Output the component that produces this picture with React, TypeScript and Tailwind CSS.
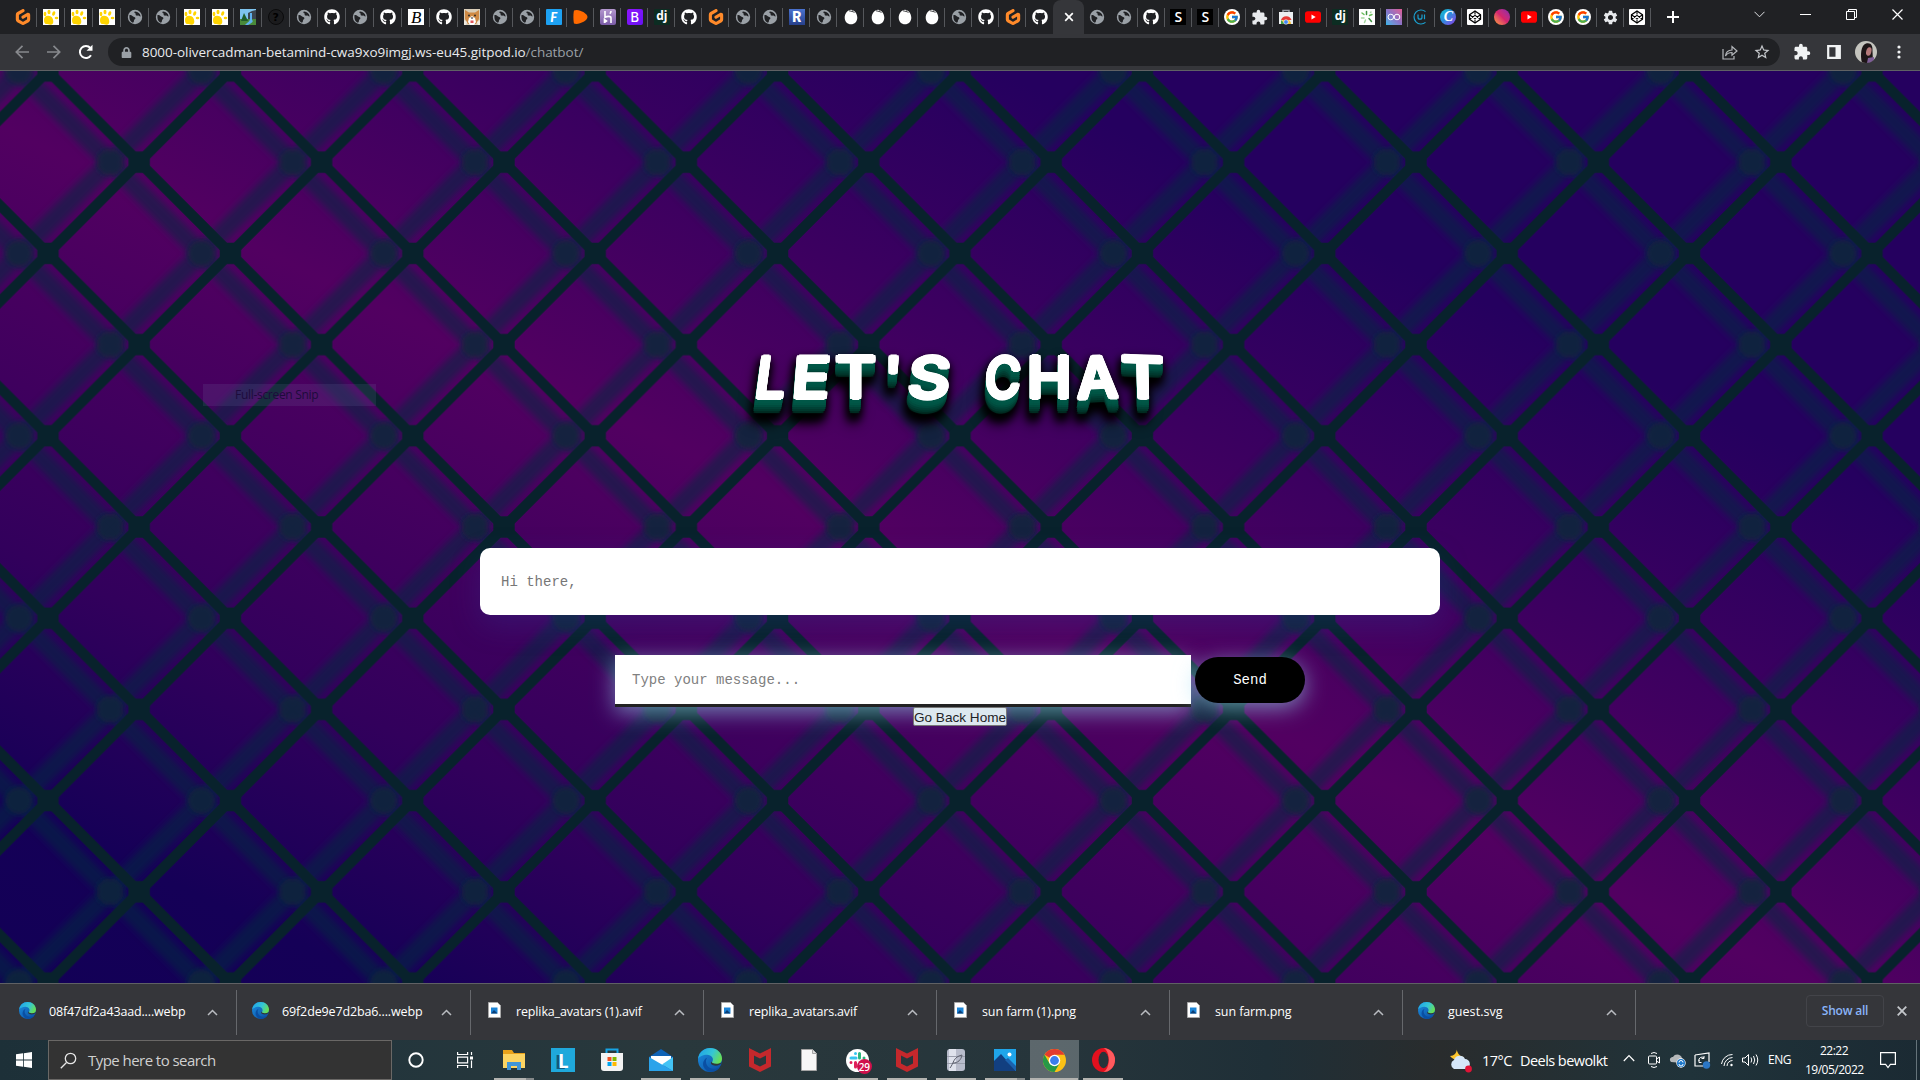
import React from "react";
import { FaGithub, FaLock } from "react-icons/fa";
import { FcGoogle } from "react-icons/fc";
import { SiGitpod } from "react-icons/si";
import { MdExtension, MdSettings, MdStarBorder } from "react-icons/md";

type IconProps = { size?: number };

const Globe = () => (
  <svg width="16" height="16" viewBox="0 0 16 16">
    <circle cx="8" cy="8" r="7.200" fill="#9aa0a6" />
    <path d="M2.500 6c1.500 0 2.300.2 2.900 1 .8 1.200 2.600.6 3 2 .3 1.400-1.600 1.300-1.500 2.900 0 1-.7 1.500-1 1.900C3.500 12.800 2 10.500 2.500 6z" fill="#202124" />
    <path d="M8.300 2.500c2.700.2 4.900 2 5.300 4.700-1 .8-1.300-.9-2.500-.6-1.500.4-3-.2-2.400-1.600.3-.9-1.200-.7-1.300-1.500-.1-.6.3-.8.9-1z" fill="#202124" />
  </svg>
);

const Paw = () => (
  <span className="flex h-4 w-4 items-center justify-center bg-white">
    <svg width="16" height="16" viewBox="0 0 16 16" fill="#ffd400">
      <path d="M1 11c0-3 2-4.500 4.500-4.200C8.500 7 10 9 10.300 12c.2 2.500-1 4-3 3.800-1.500-.3-2.500-.8-4-.8C1.500 15 1 13 1 11z" />
      <ellipse cx="2" cy="5" rx="1.400" ry="2.200" />
      <ellipse cx="6" cy="3" rx="1.500" ry="2.300" />
      <ellipse cx="10.700" cy="4.500" rx="1.500" ry="2.300" transform="rotate(20 10.700 4.500)" />
      <ellipse cx="13.500" cy="9" rx="1.800" ry="1.300" />
    </svg>
  </span>
);

const Landscape = () => (
  <svg width="16" height="16" viewBox="0 0 16 16">
    <rect width="16" height="16" fill="#7ec3ee" />
    <path d="M8 4l4-2 4-1v10H8z" fill="#3c4650" />
    <path d="M0 10h16v6H0z" fill="#4a8a3a" />
    <path d="M10 4h2v7c2 1 0 3-4 5H5c3-3 5-4 5-6z" fill="#5fb2ef" />
    <path d="M4 4l4 8H1z" fill="#1f5c2a" />
  </svg>
);

const Question = () => (
  <span className="flex h-4 w-4 items-center justify-center rounded-full border border-[#0b0b0c] bg-[#1b1b1d] font-['DejaVu_Sans'] text-[11px] leading-none font-bold text-black">?</span>
);

const Corgi = () => (
  <svg width="16" height="16" viewBox="0 0 16 16">
    <rect width="16" height="16" fill="#d9cdb8" />
    <path d="M1 1l4 2.500h6L15 1v9l-3 5H4l-3-5z" fill="#cf8a45" />
    <path d="M5 9l3-2 3 2 1 4-2 3H6l-2-3z" fill="#fff" />
    <circle cx="5" cy="6.500" r=".9" fill="#222" />
    <circle cx="11" cy="6.500" r=".9" fill="#222" />
    <path d="M6.500 8.500h3L8 10z" fill="#222" />
    <path d="M6.500 11.500h3v2.500h-3z" fill="#e0575b" />
    <path d="M0 11l3 2-1 3H0zM16 11l-3 2 1 3h2z" fill="#efeae0" />
  </svg>
);

const Egg = () => (
  <svg width="16" height="16" viewBox="0 0 16 16">
    <path d="M8 .8c3.500 0 6.300 4 6.300 8 0 3.800-2.700 6.500-6.300 6.500S1.700 12.600 1.700 8.800c0-4 2.800-8 6.300-8z" fill="#fff" />
    <path d="M6 1.800l3 .6 1-1.200M9 2.400l2.600 1" stroke="#202124" fill="none" strokeWidth=".8" />
  </svg>
);

const Letter = ({ c, t }: { c: string; t: string }) => (
  <span className={"flex h-4 w-4 items-center justify-center leading-none " + c}>{t}</span>
);

const WebStore = () => (
  <svg width="16" height="16" viewBox="0 0 16 16">
    <path d="M5 4V1.500h6V4" fill="none" stroke="#9aa0a6" strokeWidth="1.500" />
    <path d="M1 3h14v12H1z" fill="#eceff1" />
    <path d="M3 15a5 5 0 0 1 10 0z" fill="#fbc02d" />
    <path d="M3 11a5.500 5.500 0 0 1 10.500 0z" fill="#e53935" />
    <path d="M3 11v4h4z" fill="#43a047" />
    <circle cx="8" cy="13" r="2.300" fill="#4285f4" stroke="#fff" strokeWidth=".6" />
  </svg>
);

const Youtube = () => (
  <svg width="16" height="16" viewBox="0 0 16 16">
    <rect y="2.300" width="16" height="11.400" rx="2.800" fill="#f00" />
    <path d="M6.500 5.500v5L10.700 8z" fill="#fff" />
  </svg>
);

const Leaf = () => (
  <svg width="16" height="16" viewBox="0 0 16 16">
    <rect width="16" height="16" fill="#fff" />
    <g strokeWidth="1.500" strokeLinecap="round">
      <path d="M7.500 2.500v3M10 9.500l2.500 3" stroke="#3f9142" />
      <path d="M3 4l2 1.500M10.500 6.500l2.500-1" stroke="#6abf5b" />
      <path d="M2.500 9h2.500M6.500 11L5.500 13.500M11.500 3.500l.5-.5" stroke="#a5d6a0" />
    </g>
  </svg>
);

const Plug = () => (
  <svg width="16" height="16" viewBox="0 0 16 16" fill="none">
    <path d="M12.500 2.600a7 7 0 1 0 0 10.800" stroke="#1ba0cf" strokeWidth="1.200" />
    <path d="M5 5.500v2.700a2 2 0 0 0 4 0V5.500M11.500 5.500v4.700" stroke="#1ba0cf" strokeWidth="1.200" />
  </svg>
);

const Infinity2 = () => (
  <span className="flex h-4 w-4 items-center justify-center bg-linear-to-tr from-[#22b5e8] via-[#8a72c6] to-[#e15a94]">
    <svg width="14" height="8" viewBox="0 0 14 8" fill="none" stroke="#fff" strokeWidth="1">
      <circle cx="3.800" cy="4" r="2.800" />
      <circle cx="10" cy="4" r="2.800" />
    </svg>
  </span>
);

const Codepen = () => (
  <svg width="16" height="16" viewBox="0 0 16 16">
    <rect width="16" height="16" rx="1" fill="#fff" />
    <g fill="none" stroke="#000" strokeWidth="1.300" strokeLinejoin="round">
      <path d="M8 2l5.500 3.700v4.600L8 14l-5.500-3.700V5.700z" />
      <path d="M8 2v3.600M8 10.400V14M2.500 5.700L8 9.600l5.500-3.900M2.500 10.300L8 6.400l5.500 3.900" strokeWidth="1.100" />
    </g>
  </svg>
);

const Heroku = () => (
  <span className="flex h-4 w-4 items-center justify-center rounded-[2px] bg-linear-to-b from-[#b497cf] to-[#7a5ba6]">
    <svg width="10" height="12" viewBox="0 0 10 12" fill="none" stroke="#fff" strokeWidth="1.600">
      <path d="M2 0v6.300c2-1 6-1.700 6 .7v5M8 0c0 1-.4 2-1.200 2.800M1.500 8.500v3l2-1.500z" />
    </svg>
  </span>
);

const Cloud = () => (
  <svg width="16" height="16" viewBox="0 0 16 16">
    <path d="M1 1.500C5-.8 14.500 4 14.500 8S5 16.300 1 14.500C.2 12 .2 4 1 1.500z" fill="#ff6a00" />
  </svg>
);

const TAB_ICONS: Record<string, React.ReactNode> = {
  gitpod: <SiGitpod size={16} color="#ff8a2a" />,
  paw: <Paw />,
  globe: <Globe />,
  land: <Landscape />,
  quest: <Question />,
  github: <FaGithub size={16} color="#fff" />,
  script: <Letter c="bg-white font-['Liberation_Serif'] text-[17px] italic text-black" t="B" />,
  corgi: <Corgi />,
  f: <Letter c="rounded-[1px] bg-[#1da1f2] font-['Lato'] text-[13px] font-black italic text-white" t="F" />,
  cloud: <Cloud />,
  heroku: <Heroku />,
  boot: <Letter c="rounded-[2px] bg-linear-to-br from-[#9013fe] to-[#6610f2] font-['Inter'] text-[13px] font-medium text-white" t="B" />,
  dj: <Letter c="rounded-[1px] bg-[#0c2d22] pb-0.5 font-['Open_Sans'] text-[12px] font-bold text-white" t="dj" />,
  r: <Letter c="bg-linear-to-b from-[#4a72cf] to-[#27408b] font-['Roboto'] text-[14px] font-black text-white" t="R" />,
  egg: <Egg />,
  s: <Letter c="bg-black font-['Open_Sans'] text-[14px] font-semibold text-white" t="S" />,
  google: (
    <span className="flex h-4 w-4 items-center justify-center rounded-full bg-white">
      <FcGoogle size={14} />
    </span>
  ),
  puzzle: <MdExtension size={17} color="#e8eaed" />,
  store: <WebStore />,
  youtube: <Youtube />,
  leaf: <Leaf />,
  co: <Infinity2 />,
  ui: <Plug />,
  canva: <Letter c="rounded-full bg-linear-to-br from-[#00c4cc] via-[#2f86dd] to-[#7d2ae8] font-['Liberation_Serif'] text-[14px] font-bold italic text-white" t="C" />,
  codepen: <Codepen />,
  insta: <span className="h-4 w-4 rounded-full bg-linear-to-tr from-[#fb9a1d] via-[#d6246e] to-[#8a1fae]" />,
  gear: <MdSettings size={17} color="#e8eaed" />,
};

const GROUP_A = "gitpod paw paw paw globe globe paw paw land quest globe github globe github script github corgi globe globe f".split(" ");
const GROUP_B = "cloud heroku boot dj github gitpod globe globe r globe egg egg egg egg globe github gitpod github".split(" ");
const GROUP_C = "globe globe github s s google puzzle store youtube dj leaf co ui canva codepen insta youtube google google gear codepen".split(" ");

const Tab = ({ kind, w, sep = true }: { kind: string; w: string; sep?: boolean }) => (
  <div className={"relative flex h-full shrink-0 items-center justify-center " + w}>
    {TAB_ICONS[kind]}
    {sep && <span className="absolute top-2 right-0 h-[19px] w-px bg-[#55575b]" />}
  </div>
);

const TabStrip = () => (
  <div className="flex h-[34px] w-full bg-[#202124]">
    <div className="flex h-full w-[1740px] shrink-0 pl-[9px]">
      {GROUP_A.map((k, i) => <Tab key={i} kind={k} w={i < 17 ? "w-[28.080px]" : "w-[27px]"} />)}
      {GROUP_B.map((k, i) => <Tab key={i} kind={k} w="w-[27px]" sep={i < GROUP_B.length - 1} />)}
      <div className="flex h-full w-[30.5px] shrink-0 items-center justify-center rounded-t-lg bg-[#35363a]">
        <svg width="10" height="10" viewBox="0 0 10 10" stroke="#fff" strokeWidth="1.700"><path d="M1.200 1.200l7.600 7.600M8.800 1.200L1.200 8.800" /></svg>
      </div>
      {GROUP_C.map((k, i) => <Tab key={i} kind={k} w="w-[27px]" sep={i > 0} />)}
      <div className="flex w-[45px] items-center justify-center">
        <svg width="12" height="12" viewBox="0 0 12 12" stroke="#fff" strokeWidth="2"><path d="M6 0v12M0 6h12" /></svg>
      </div>
    </div>
    <div className="flex h-[28px] flex-1 items-center">
      <svg className="ml-[14px]" width="11" height="7" viewBox="0 0 11 7" fill="none" stroke="#dfe1e5"><path d="M.5.8l5 5 5-5" /></svg>
      <svg className="ml-[35px]" width="11" height="10" viewBox="0 0 11 10"><path d="M0 5.500h11" stroke="#fff" /></svg>
      <svg className="ml-[35px]" width="11" height="11" viewBox="0 0 11 11" fill="none" stroke="#fff"><path d="M.5 2.500h8v8h-8zM2.500 2.500v-2h8v8h-2" /></svg>
      <svg className="ml-[35px]" width="11" height="11" viewBox="0 0 11 11" stroke="#fff" strokeWidth="1.200"><path d="M.5.5l10 10M10.500.5l-10 10" /></svg>
    </div>
  </div>
);

const Arrow = ({ flip }: { flip?: boolean }) => (
  <svg className={flip ? "-scale-x-100" : ""} width="14" height="14" viewBox="0 0 14 14" fill="none" stroke="#87898d" strokeWidth="1.700">
    <path d="M14 7H1.500M7.500.8L1.300 7l6.200 6.200" />
  </svg>
);

const Toolbar = () => (
  <div className="flex h-[37px] w-full items-center border-b border-[#5f6164] bg-[#35363a]">
    <div className="flex w-[108px] shrink-0 items-center pl-[15px]">
      <Arrow />
      <span className="w-[18px]" />
      <Arrow flip />
      <svg className="ml-[17px]" width="16" height="16" viewBox="0 0 16 16"><path d="M13 11.200A6 6 0 1 1 12.400 4" fill="none" stroke="#fff" strokeWidth="2" /><path d="M14.500.8v6h-6z" fill="#fff" /></svg>
    </div>
    <div className="flex h-7 w-[1672px] shrink-0 items-center rounded-full bg-[#202124] pl-[13px]">
      <FaLock size={11} color="#9aa0a6" />
      <span className="ml-[10px] mt-px whitespace-nowrap font-['Open_Sans'] text-[13.5px] leading-none tracking-[-0.05px] text-[#e8eaed]">
        8000-olivercadman-betamind-cwa9xo9imgj.ws-eu45.gitpod.io<span className="text-[#9aa0a6]">/chatbot/</span>
      </span>
      <svg className="ml-auto" width="16" height="15" viewBox="0 0 16 15" fill="none" stroke="#b5b8bc" strokeWidth="1.200"><path d="M1 4v10h11v-3M3.500 11c.3-4 2.500-5.800 6.500-6V1.500L15 6l-5 4.300V7.500c-3 0-5 .8-6.500 3.500z" /></svg>
      <span className="ml-[15px] mr-[9px]"><MdStarBorder size={18} color="#c4c7cb" /></span>
    </div>
    <div className="flex flex-1 items-center pl-[13px]">
      <MdExtension size={18} color="#f1f3f4" />
      <svg className="ml-[16px]" width="14" height="14" viewBox="0 0 14 14"><path d="M1.200 1.200h11.600v11.600H1.200z" fill="none" stroke="#f1f3f4" strokeWidth="2.200" /><path d="M8.500 1h4.500v12H8.500z" fill="#f1f3f4" /></svg>
      <svg className="ml-[14px]" width="22" height="22" viewBox="0 0 22 22">
        <defs><clipPath id="face"><circle cx="11" cy="11" r="11" /></clipPath></defs>
        <g clipPath="url(#face)">
          <rect width="22" height="22" fill="#c4c4be" />
          <path d="M7 22C5 14 6 4 11 2.500S18 5 17.500 10L18 22z" fill="#1c1517" />
          <ellipse cx="13.800" cy="10.500" rx="2.600" ry="4.300" fill="#b5797a" transform="rotate(15 13.800 10.500)" />
          <path d="M13 17l6-1v6h-7z" fill="#7d5d96" />
        </g>
      </svg>
      <svg className="ml-[20px]" width="4" height="14" viewBox="0 0 4 14" fill="#f1f3f4"><circle cx="2" cy="2" r="1.600" /><circle cx="2" cy="7" r="1.600" /><circle cx="2" cy="12" r="1.600" /></svg>
    </div>
  </div>
);

const NODES = [[91.2, 91.2], [0, 0], [182.4, 0], [0, 182.4], [182.4, 182.4]];

/* Chain-link fence tile with its soft shadow cast to the left. */
const FencePattern = () => (
  <svg className="absolute inset-0 h-full w-full">
    <defs>
      <filter id="soft" x="-20%" y="-20%" width="140%" height="140%"><feGaussianBlur stdDeviation="3.600" /></filter>
      <filter id="softNode" x="-50%" y="-50%" width="200%" height="200%"><feGaussianBlur stdDeviation="2.800" /></filter>
      <pattern id="fence" width="182.400" height="182.400" patternUnits="userSpaceOnUse" x="-43.200" y="-91.200">
        <path d="M-20 -20L202.400 202.400M202.400 -20L-20 202.400" stroke="#08222c" strokeWidth="10.200" />
        {NODES.map(([x, y], i) => (
          <path key={i} transform={`translate(${x} ${y})`} d="M-4.300 -10.700h8.600l6.400 6.400v8.600l-6.400 6.400h-8.600l-6.400 -6.400v-8.600z" fill="#08222c" />
        ))}
      </pattern>
      <pattern id="shade" width="182.400" height="182.400" patternUnits="userSpaceOnUse" x="-72.300" y="-91.200">
        <g opacity=".52">
          <path d="M-40 -40L222.400 222.400M222.400 -40L-40 222.400" stroke="#062c3c" strokeWidth="17.500" filter="url(#soft)" />
        </g>
        {NODES.map(([x, y], i) => (
          <circle key={i} cx={x} cy={y} r="13.500" fill="#0a2838" opacity=".72" filter="url(#softNode)" />
        ))}
      </pattern>
    </defs>
    <rect width="100%" height="100%" fill="url(#shade)" />
    <rect width="100%" height="100%" fill="url(#fence)" />
  </svg>
);

/* Each letter: box width, glyph transform. */
const TITLE: [string, string, string][] = [
  ["L", "w-[38px]", "-skew-x-[8deg] scale-x-95"],
  ["E", "w-[43px]", "-skew-x-[4deg] scale-x-110"],
  ["T", "w-[45px]", "scale-x-110"],
  ["'", "w-[29px]", "-skew-x-[2deg]"],
  ["S", "w-[45px]", "-skew-x-[5deg] scale-x-115"],
  ["", "w-[28px]", ""],
  ["C", "w-[45px]", "-skew-x-[4deg] scale-x-[0.86]"],
  ["H", "w-[48px]", "scale-x-105"],
  ["A", "w-[49px]", "-rotate-2 scale-x-[1.02]"],
  ["T", "w-[42px]", "rotate-2 scale-x-115 skew-x-[3deg]"],
];

const Title = () => (
  <h1
    className="mt-[267px] ml-[752px] flex h-[80px] font-['Inter'] text-[57px] leading-[79px] font-medium text-white [filter:drop-shadow(-1px_6px_4px_#000)_drop-shadow(-1px_4px_5px_#000)]"
    aria-label="Let's chat"
  >
    {TITLE.map(([ch, w, t], i) => (
      <span key={i} className={"flex shrink-0 justify-center " + w}>
        <span className={"[text-shadow:2px_0_#fff,-2px_0_#fff,0_2px_#fff,0_-2px_#fff,1.400px_1.400px_#fff,-1.400px_1.400px_#fff,1.400px_-1.400px_#fff,-1.400px_-1.400px_#fff,1.900px_.8px_#fff,-1.900px_.8px_#fff,1.900px_-.8px_#fff,-1.900px_-.8px_#fff,1px_3px_#005747,-1px_3px_#005747,1.500px_5px_#005747,-2px_5px_#005747,1.500px_7px_#005444,-2px_7px_#005444,1.500px_9px_#004c3e,-2.500px_9px_#004c3e,1.500px_11px_#004135,-2.500px_11px_#004135,1px_13px_#00382d,-2.500px_13px_#00382d,0_15px_1px_#002c22,-2px_15px_1px_#002c22] " + t}>{ch}</span>
      </span>
    ))}
  </h1>
);

const Page = () => (
  <main className="relative h-[912px] w-full overflow-hidden bg-[linear-gradient(to_top_right,#120056_0%,#150057_10%,#32005c_24%,#520061_47%,#25005f_76%,#25005f_100%)]">
    <FencePattern />
    <div className="relative flex flex-col">
      <Title />
      <div className="mt-[130px] flex h-[67px] w-[960px] items-center self-center rounded-[10px] bg-white pt-px pl-[21px] font-['Liberation_Mono'] text-[14px] text-[#777] shadow-[0_10px_30px_rgba(40,70,160,0.25)]">
        Hi there,
      </div>
      <div className="mt-10 flex items-center justify-center gap-1">
        <div className="flex h-[52px] w-[576px] items-center border-b-[3px] border-[#222] bg-white pt-0.5 pl-[17px] font-['Liberation_Mono'] text-[14px] text-[#808080] shadow-[0_5px_22px_rgba(150,220,240,0.6)]">
          Type your message...
        </div>
        <button className="h-[46px] w-[110px] -translate-y-px rounded-[23px] bg-black font-['Liberation_Mono'] text-[14px] text-white shadow-[0_5px_22px_rgba(150,220,240,0.6)]">Send</button>
      </div>
      <button className="relative flex h-[19px] w-[94px] items-center justify-center self-center rounded-[2px] border border-[#767676] bg-[#dce8ef] pt-px font-['Liberation_Sans'] text-[13.600px] leading-[17px] whitespace-nowrap text-[#1c2226]">Go Back Home</button>
    </div>
    <div className="absolute top-[313px] left-[203px] flex h-[22px] w-[173px] items-center bg-[#7880b0]/15 pl-8 font-['Open_Sans'] text-[12px] tracking-tight text-[#1d0b3c]">
      Full-screen Snip
    </div>
  </main>
);

const EdgeIcon = ({ size = 16 }: IconProps) => (
  <svg width={size} height={size} viewBox="0 0 24 24">
    <defs>
      <linearGradient id="edgeTop" x1="0" x2="1" y1=".2" y2=".6"><stop offset="0" stopColor="#1fa3e8" /><stop offset=".55" stopColor="#35c6d5" /><stop offset="1" stopColor="#6be04e" /></linearGradient>
      <linearGradient id="edgeLow" x1="0" x2="1" y1="0" y2="1"><stop offset="0" stopColor="#1b8fe0" /><stop offset="1" stopColor="#0b4a9e" /></linearGradient>
    </defs>
    <circle cx="12" cy="12" r="12" fill="url(#edgeLow)" />
    <path d="M0 11C1 4 6 0 12.200 0 19 0 24 5 24 10.500c0 4-3 6.300-6.500 6.300-3 0-4.500-1.200-3.500-2.500 2.600-3.500-.5-7.500-5-7.500-4 0-8 2-9 4.200z" fill="url(#edgeTop)" />
    <path d="M9.500 9.500c-3 3-1.500 9.500 4 11 3 .8 6 .2 8.500-1.500C17 26 8 25 5.500 18.500c-1.300-3.500.2-7.500 4-9z" fill="#0a4fa3" />
    <path d="M24 14.500c-2 3-6 4-9.500 2.500-2-1-2-2.500-1-3.500 0 2 5 3.500 10.500 1z" fill="#2e373b" />
  </svg>
);

const FileIcon = () => (
  <svg width="13" height="16" viewBox="0 0 13 16">
    <path d="M.5.5h9l3 3v12H.5z" fill="#fff" stroke="#a9a9a9" />
    <path d="M3 5.500h6.500v6H3z" fill="#1c84d6" />
    <path d="M3 11.500l3-3.500 3.500 3.500z" fill="#0b3f78" />
  </svg>
);

const DOWNLOADS: [string, string, string, string][] = [
  ["08f47df2a43aad....webp", "edge", "w-[237px] pl-[19px]", "tracking-[-0.15px]"],
  ["69f2de9e7d2ba6....webp", "edge", "w-[234px] pl-[15px]", "tracking-[-0.13px]"],
  ["replika_avatars (1).avif", "file", "w-[233px] pl-[17px]", "tracking-[-0.14px]"],
  ["replika_avatars.avif", "file", "w-[233px] pl-[17px]", "tracking-[-0.18px]"],
  ["sun farm (1).png", "file", "w-[233px] pl-[17px]", "tracking-[-0.1px]"],
  ["sun farm.png", "file", "w-[233px] pl-[17px]", "tracking-[-0.1px]"],
  ["guest.svg", "edge", "w-[233px] pl-[15px]", "tracking-[0.05px]"],
];

const Downloads = () => (
  <div className="flex h-[57px] w-full items-center border-t border-[#5f6164] bg-[#35363a] font-['Open_Sans'] text-[12.500px] text-white">
    {DOWNLOADS.map(([name, kind, cls, track], i) => (
      <div key={i} className={"flex h-[45px] shrink-0 items-center border-r border-[#66686c] pr-[18px] " + cls}>
        <span className="mb-1">{kind === "edge" ? <EdgeIcon size={17} /> : <FileIcon />}</span>
        <span className={"mt-px whitespace-nowrap " + track + (kind === "file" ? " ml-[15px]" : " ml-[13px]")}>{name}</span>
        <svg className="ml-auto" width="11" height="7" viewBox="0 0 11 7" fill="none" stroke="#b9bcc0" strokeWidth="1.500"><path d="M1 6l4.500-4.500L10 6" /></svg>
      </div>
    ))}
    <div className="mb-[3px] ml-auto flex h-8 w-[78px] items-center justify-center rounded border border-[#434449] text-[12px] font-semibold tracking-[-0.2px] text-[#8ab4f8]">Show all</div>
    <svg className="mr-[13px] mb-[3px] ml-[13px]" width="10" height="10" viewBox="0 0 10 10" stroke="#c4c7cb" strokeWidth="1.800"><path d="M.7.7l8.600 8.600M9.300.7L.7 9.300" /></svg>
  </div>
);

const Mcafee = () => (
  <svg width="22" height="24" viewBox="0 0 22 24"><path d="M0 0l11 5.500L22 0v18.500L11 24 0 18.500zM5 7.500v8l6 3 6-3v-8l-6 3z" fill="#c5282c" fillRule="evenodd" /></svg>
);

const TASKS: [React.ReactNode, string][] = [
  [
    <svg width="22" height="20" viewBox="0 0 22 20"><path d="M0 0h9l2 3h11v15H0z" fill="#e9a21b" /><path d="M0 4h22v14H0z" fill="#fcd462" /><path d="M4 20v-8h14v8h-4v-4H8v4z" fill="#3f95d8" /></svg>,
    "wide",
  ],
  [<span className="flex h-6 w-6 items-center justify-center bg-[#1fa9dc] font-['Lato'] text-[19px] leading-none font-black text-white [text-shadow:-3px_1px_#12587c]">L</span>, ""],
  [
    <svg width="24" height="24" viewBox="0 0 24 24"><path d="M6.500 6V1.500h11V6" fill="none" stroke="#17a4e4" strokeWidth="2" /><path d="M1 5h22v15a3 3 0 0 1-3 3H4a3 3 0 0 1-3-3z" fill="#f3f3f3" /><path d="M7.500 9h4v4h-4z" fill="#f25022" /><path d="M12.500 9h4v4h-4z" fill="#7fba00" /><path d="M7.500 14h4v4h-4z" fill="#00a4ef" /><path d="M12.500 14h4v4h-4z" fill="#ffb900" /></svg>,
    "",
  ],
  [
    <svg width="24" height="22" viewBox="0 0 24 22"><path d="M0 8l12-8 12 8v14H0z" fill="#0e62b5" /><path d="M2 7h20v7L12 17 2 12z" fill="#fff" /><path d="M0 8l24 14H0z" fill="#2ba3ea" /><path d="M24 8v14L13 15.500z" fill="#43c3f5" /></svg>,
    "on",
  ],
  [<EdgeIcon size={24} />, "on"],
  [<Mcafee />, ""],
  [<svg width="16" height="22" viewBox="0 0 16 22"><path d="M.5.5h11l4 4v17H.5z" fill="#f7f7f7" stroke="#a5a5a5" /><path d="M11.500.5v4h4" fill="#ddd" stroke="#a5a5a5" /></svg>, ""],
  [
    <span className="relative flex h-6 w-6 items-center justify-center">
      <svg width="23" height="23" viewBox="0 0 23 23"><circle cx="11.500" cy="11.500" r="11.500" fill="#fff" /><g strokeWidth="3" strokeLinecap="round"><path d="M5 9h5M9.500 4.500v0" stroke="#36c5f0" /><path d="M13.500 4.500V9M18 9v0" stroke="#2eb67d" /><path d="M5 13.500v0M9.500 13.500V18" stroke="#e01e5a" /></g></svg>
      <span className="absolute top-[11px] left-[11px] flex h-[15px] w-[15px] items-center justify-center rounded-full bg-[#d0104c] font-['Open_Sans'] text-[10px] leading-none font-semibold tracking-tight text-white">29</span>
    </span>,
    "on",
  ],
  [<Mcafee />, "on"],
  [
    <svg width="18" height="22" viewBox="0 0 18 22"><rect width="18" height="22" rx="3" fill="#b8bccb" /><rect x="2" width="7" height="22" fill="#dfe2ec" /><path d="M0 7.500h18M0 14.500h18" stroke="#9a9eac" /><path d="M3 19C7 14 6 8 15 6c-1 5-4 8-9 8" stroke="#5c5f6c" fill="none" /></svg>,
    "on",
  ],
  [<svg width="22" height="22" viewBox="0 0 22 22"><rect width="22" height="22" fill="#1fa5ea" /><path d="M0 12l7-7 15 17H0z" fill="#123f80" /><path d="M11 11l3-2 8 8v5z" fill="#1b62ae" /><circle cx="15.500" cy="5.500" r="2" fill="#fff" /></svg>, "wide"],
  [
    <svg width="23" height="23" viewBox="0 0 24 24"><circle cx="12" cy="12" r="12" fill="#fbc116" /><path d="M12 12L1.600 6A12 12 0 0 1 22.400 6H12z" fill="#e33b2e" /><path d="M1.600 6A12 12 0 0 0 12 24l5.200-9L12 12 6.800 15z" fill="#279847" /><circle cx="12" cy="12" r="6" fill="#fff" /><circle cx="12" cy="12" r="4.600" fill="#3b7ded" /></svg>,
    "active",
  ],
  [
    <svg width="23" height="24" viewBox="0 0 23 24"><ellipse cx="11.500" cy="12" rx="11.500" ry="12" fill="#e3101e" /><path d="M11.500 0a11.500 12 0 0 1 0 24c7-3 7-21 0-24z" fill="#ff5a5e" /><ellipse cx="11.500" cy="12" rx="5" ry="8.300" fill="#26343a" /></svg>,
    "on",
  ],
];

const Tray = () => (
  <div className="ml-auto flex h-full items-center font-['Open_Sans'] text-white">
    <svg width="24" height="26" viewBox="0 0 24 26"><path d="M8 1c-1 4 3 9 7 9-3 4-10 4-14-1 4 0 7-3 7-8z" fill="#fdc52c" /><path d="M5 22a5 5 0 0 1 0-9c1-5 9-6 11-1 5 0 7 7 2 10z" fill="#d5e6f8" /><circle cx="19.500" cy="22" r="3.400" fill="#e01336" /></svg>
    <span className="mt-px ml-[9px] w-[38px] text-[14.500px] tracking-[-0.5px]">17°C</span>
    <span className="mt-px w-[103px] text-[14.500px] whitespace-nowrap tracking-[-0.55px]">Deels bewolkt</span>
    <svg className="mt-[-4px]" width="12" height="8" viewBox="0 0 12 8" fill="none" stroke="#fff" strokeWidth="1.200"><path d="M.8 7L6 1.500 11.200 7" /></svg>
    <svg className="ml-[13px]" width="12" height="18" viewBox="0 0 12 18" fill="none" stroke="#fff"><rect x=".5" y="5" width="8" height="8" rx="1" /><path d="M8.500 8l3-2v6l-3-2M3 2.500q3-2 6 0M3 15.500q3 2 6 0" /></svg>
    <svg className="ml-[9px]" width="17" height="15" viewBox="0 0 17 15"><path d="M2 9C-1 5 3 4 4 4c2-4 8-3 9 1l2 3-2 2z" fill="#b5b8ba" /><circle cx="12" cy="10" r="4.700" fill="#fff" /><circle cx="12" cy="10" r="4" fill="#1c77c9" /><path d="M10 9.500a2 2 0 0 1 4 0M14 11a2 2 0 0 1-4 0" stroke="#fff" fill="none" /></svg>
    <svg className="ml-[8px]" width="17" height="17" viewBox="0 0 17 17"><path d="M1 3l14-2v9M1 3v11h8" fill="none" stroke="#fff" strokeWidth="1.200" /><path d="M5 9a3 3 0 0 1 5-3M10 4v2.500H7.500M5 8v2.500h2.500" fill="none" stroke="#fff" /><circle cx="12.500" cy="13" r="3.700" fill="#2c77c4" /></svg>
    <svg className="ml-[10px]" width="12" height="14" viewBox="0 0 12 14" fill="none" stroke="#fff"><path d="M.5 11A11 11 0 0 1 11.500 1.500M3 13A9 9 0 0 1 11.500 4.500M6 13a6 6 0 0 1 5.500-5.500" strokeWidth="1" /><circle cx="10.500" cy="12" r="1.200" fill="#fff" stroke="none" /></svg>
    <svg className="ml-[9px]" width="17" height="14" viewBox="0 0 17 14" fill="none" stroke="#fff"><path d="M.5 5H3l3.500-3.500v11L3 9H.5zM9 4.500q1.500 2.500 0 5M11.500 3q2.500 4 0 8M14 1.500q3.500 5.500 0 11" /></svg>
    <span className="ml-[9px] w-[37px] text-[12px] tracking-[-0.5px]">ENG</span>
    <div className="w-[58px] pb-px text-center text-[12px] leading-[19px] tracking-[-0.5px] whitespace-nowrap">
      <div>22:22</div>
      <div>19/05/2022</div>
    </div>
    <svg className="ml-[17px]" width="16" height="17" viewBox="0 0 16 17" fill="none" stroke="#fff" strokeWidth="1.200"><path d="M.6.6h14.800v11.800h-5L8 15.500l-2.400-3.100h-5z" /></svg>
    <span className="mr-[3px] ml-[20px] h-full w-px bg-[#65737a]" />
  </div>
);

const BAR: Record<string, string> = {
  "": "hidden",
  on: "w-[40px] bg-[#b3b3b0]",
  wide: "w-[40px] border-r-8 border-[#85898a] bg-[#b3b3b0]",
  active: "w-[48px] bg-[#b3b3b0]",
};

const Taskbar = () => (
  <div className="flex h-10 w-full items-center bg-[linear-gradient(90deg,#1d3038_0%,#20343c_12%,#29383c_35%,#26353b_55%,#1f2f37_66%,#292c2d_75%,#20333a_88%,#1b2a33_100%)]">
    <div className="flex w-12 shrink-0 justify-center">
      <svg width="16" height="16" viewBox="0 0 16 16" fill="#fff"><path d="M0 2.200L7 1.300v6.200H0zM7.800 1.200L16 0v7.500H7.800zM0 8.400h7v6.300l-7-.9zM7.800 8.400H16V16l-8.200-1.200z" /></svg>
    </div>
    <div className="flex h-10 w-[344px] shrink-0 items-center border border-[#6a6866] bg-[#333] pl-[11px]">
      <svg width="17" height="17" viewBox="0 0 17 17" fill="none" stroke="#e6e6e6" strokeWidth="1.300"><circle cx="10.500" cy="6.500" r="5.200" /><path d="M6.500 10.500L.8 16.200" /></svg>
      <span className="ml-[11px] font-['Open_Sans'] text-[15px] tracking-[-0.55px] whitespace-nowrap text-[#d0d0d0]">Type here to search</span>
    </div>
    <div className="flex w-12 shrink-0 justify-center"><svg width="16" height="16" viewBox="0 0 16 16" fill="none" stroke="#fff" strokeWidth="1.900"><circle cx="8" cy="8" r="6.700" /></svg></div>
    <div className="flex w-[49.500px] shrink-0 justify-center"><svg width="16" height="16" viewBox="0 0 16 16" fill="none" stroke="#fff" strokeWidth="1.200"><path d="M.6 0v2.500h10V0M.6 16v-2.500h10V16M.6 5.200h10v5.600H.6zM14.500 0v3M14.500 8.500V16" /><path d="M13 4.500h3v3h-3z" fill="#fff" stroke="none" /></svg></div>
    {TASKS.map(([icon, state], i) => (
      <div key={i} className={"relative flex h-10 w-[49.100px] shrink-0 items-center justify-center " + (state === "active" ? "bg-white/25" : "")}>
        {icon}
        {state !== "" && <span className={"absolute bottom-0 left-1/2 h-0.5 -translate-x-1/2 " + BAR[state]} />}
      </div>
    ))}
    <Tray />
  </div>
);

export default function App() {
  return (
    <div className="flex h-[1080px] w-[1920px] flex-col overflow-hidden bg-[#202124]">
      <TabStrip />
      <Toolbar />
      <Page />
      <Downloads />
      <Taskbar />
    </div>
  );
}
